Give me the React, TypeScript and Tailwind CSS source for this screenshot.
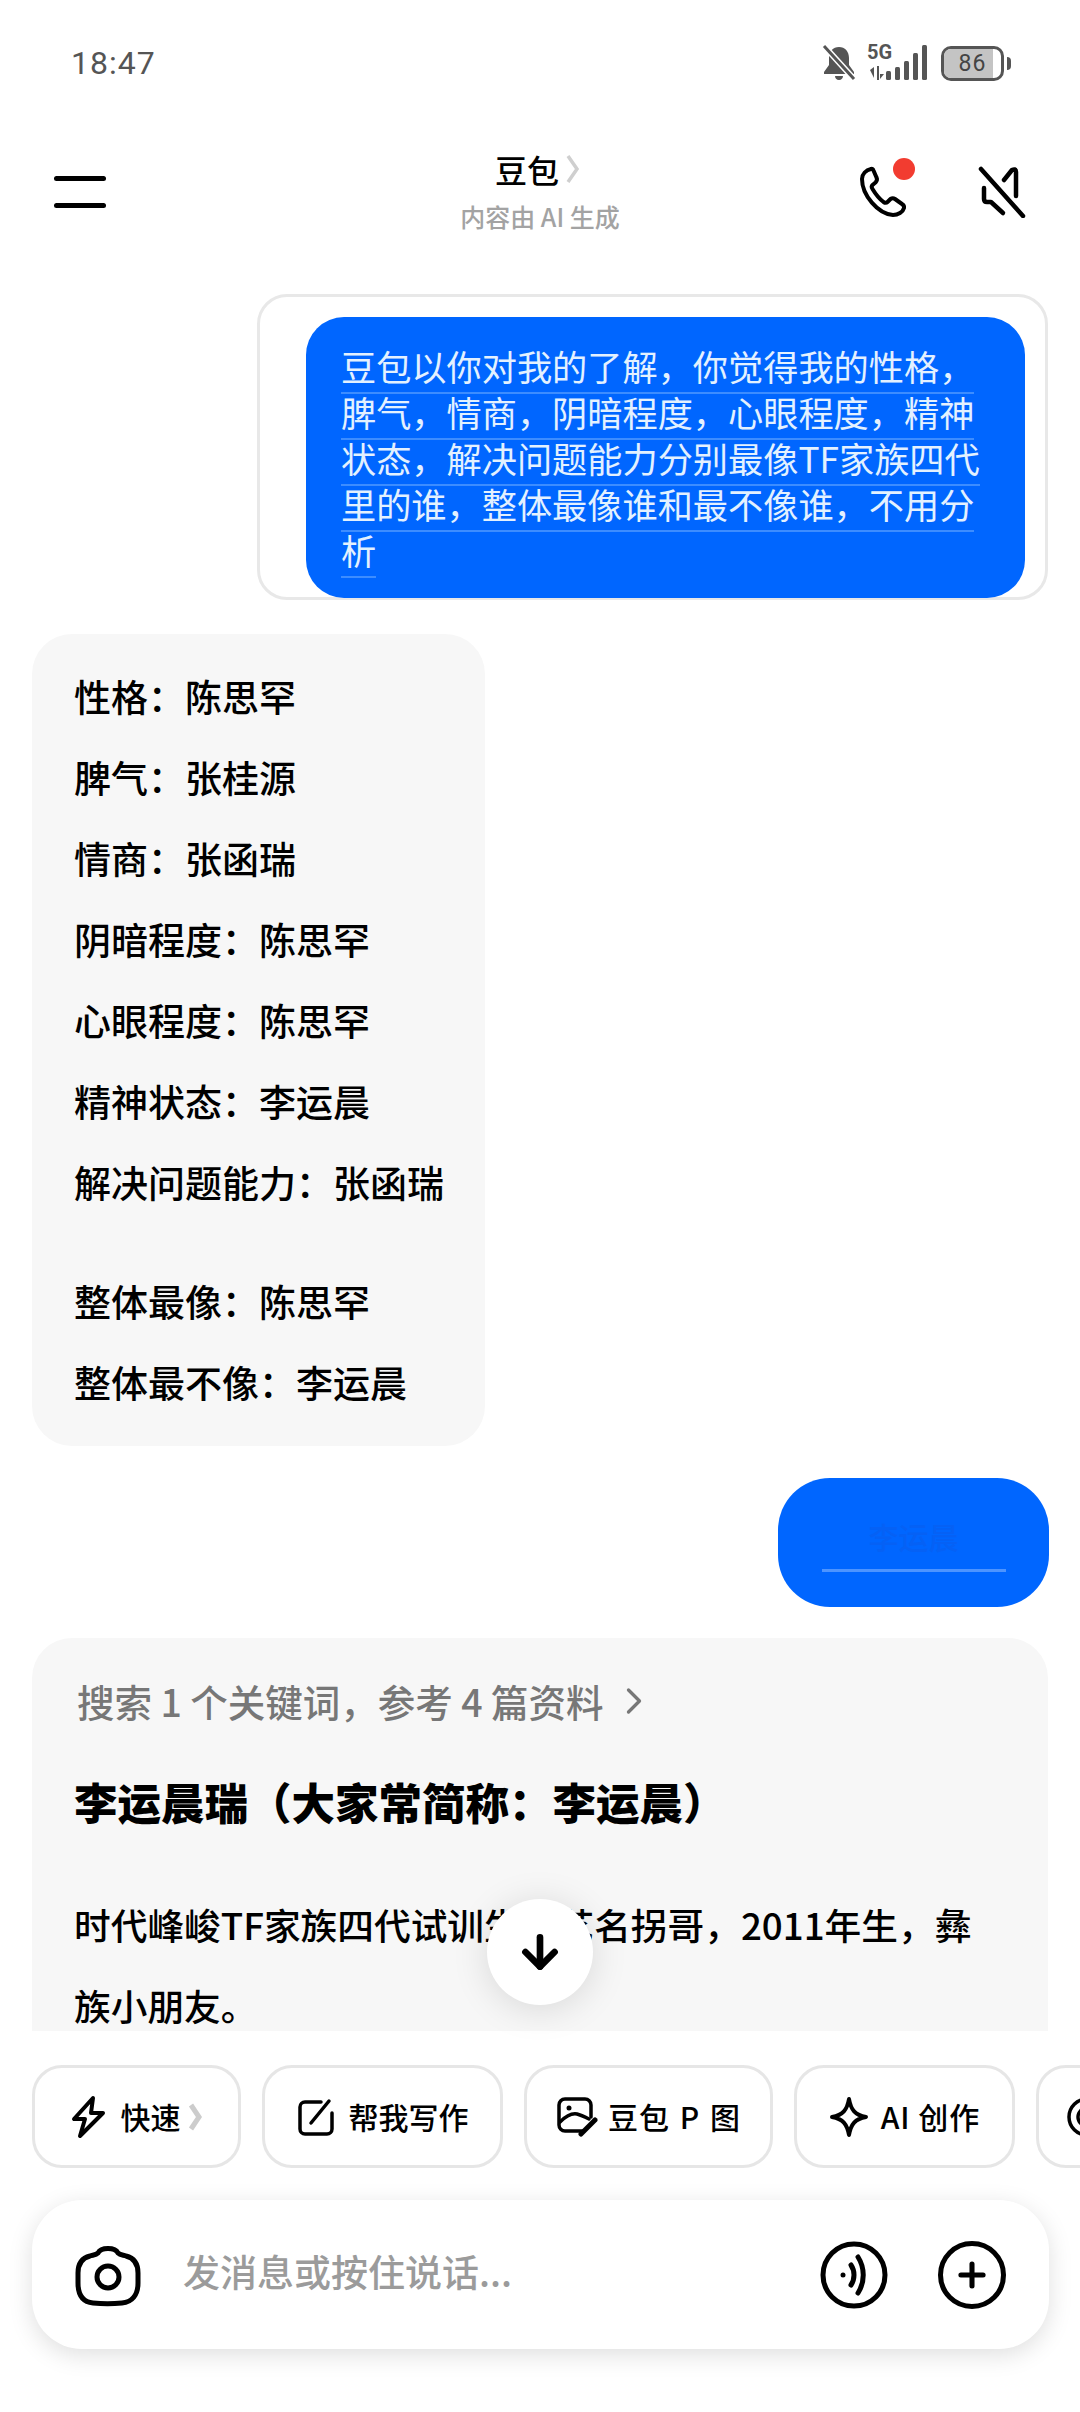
import { ArrowDown, ChevronRight, Plus } from "lucide-react";

// full-width punctuation
const C = "\uFF0C";
const K = "\uFF1A";
const L = "\uFF08";
const R = "\uFF09";

const answers = [
  ["性格", "陈思罕"],
  ["脾气", "张桂源"],
  ["情商", "张函瑞"],
  ["阴暗程度", "陈思罕"],
  ["心眼程度", "陈思罕"],
  ["精神状态", "李运晨"],
  ["解决问题能力", "张函瑞"],
];

const overall = [
  ["整体最像", "陈思罕"],
  ["整体最不像", "李运晨"],
];

const question = [
  `豆包以你对我的了解${C}你觉得我的性格${C}`,
  `脾气${C}情商${C}阴暗程度${C}心眼程度${C}精神`,
  `状态${C}解决问题能力分别最像TF家族四代`,
  `里的谁${C}整体最像谁和最不像谁${C}不用分`,
  "析",
];

function AnswerRow({ label, name }: { label: string; name: string }) {
  return (
    <p className="h-[81px] text-[37px] leading-[81px] font-medium whitespace-nowrap text-black">
      {label}
      {K}
      {name}
    </p>
  );
}

function StatusIcons() {
  return (
    <div className="flex items-center">
      <svg width="36" height="38" viewBox="0 0 36 38" className="mr-[10px]">
        <path d="M18 3c-6 0-10 4.500-10 11v7l-5 7v2h30v-2l-5-7v-7c0-6.500-4-11-10-11z" fill="#555" />
        <path d="M14 32h8c0 2-1.500 4-4 4s-4-2-4-4z" fill="#555" />
        <path d="M4 3l29 32" stroke="#fff" strokeWidth="6" />
        <path d="M3 2l30 33" stroke="#555" strokeWidth="3" />
      </svg>
      <div className="relative mr-[12px] h-[38px] w-[62px]">
        <span className="absolute -top-[3px] left-0 font-['Roboto'] text-[20px] leading-[22px] font-bold text-[#555]">5G</span>
        <svg width="62" height="38" viewBox="0 0 62 38">
          <path d="M3 26l4-3v11zM13 30l4 0-4 5zM10 22h2v14h-2z" fill="#555" />
          <rect x="19" y="27" width="5" height="9" rx="1.500" fill="#555" />
          <rect x="28" y="23" width="5" height="13" rx="1.500" fill="#555" />
          <rect x="37" y="17" width="5" height="19" rx="1.500" fill="#555" />
          <rect x="46" y="9" width="5" height="27" rx="1.500" fill="#555" />
          <rect x="55" y="1" width="5" height="35" rx="1.500" fill="#555" />
        </svg>
      </div>
      <div className="relative flex h-[35px] w-[63px] items-center justify-center overflow-hidden rounded-[10px] border-[3px] border-[#555] bg-white">
        <div className="absolute inset-y-0 left-0 w-[86%] bg-[#c4c4c4]" />
        <span className="relative font-['Roboto'] text-[23px] leading-none tracking-[1px] text-[#444]">86</span>
      </div>
      <div className="ml-[3px] h-[13px] w-[4px] rounded-r-sm bg-[#555]" />
    </div>
  );
}

function Chip({ width, icon, children }: { width: string; icon: React.ReactNode; children: React.ReactNode }) {
  return (
    <div className={`flex h-[103px] shrink-0 items-center justify-center rounded-[30px] border-[3px] border-[#e6e6e6] bg-white ${width}`}>
      {icon}
      {children}
    </div>
  );
}

const chipLabel = "text-[30px] font-medium whitespace-nowrap text-black";

export default function App() {
  return (
    <div className="flex h-[2412px] w-[1080px] flex-col overflow-hidden bg-white font-['Noto_Sans_CJK_SC',sans-serif]">
      {/* status bar */}
      <div className="flex h-[126px] shrink-0 items-center justify-between pr-[69px] pl-[71px]">
        <span className="font-['Roboto'] text-[32px] tracking-[1px] text-[#555]">18:47</span>
        <StatusIcons />
      </div>

      {/* header */}
      <div className="flex h-[132px] shrink-0 items-center justify-between pr-[54px] pl-[54px]">
        <div className="flex w-[220px] flex-col gap-[22px]">
          <div className="h-[5px] w-[52px] rounded-full bg-black" />
          <div className="h-[5px] w-[52px] rounded-full bg-black" />
        </div>
        <div className="flex flex-col items-center">
          <div className="-mt-[4px] -ml-[4px] flex h-[44px] items-center">
            <span className="text-[32px] font-medium text-black">豆包</span>
            <svg width="16" height="30" viewBox="0 0 16 30" className="ml-[6px]">
              <path d="M3 2l9 13-9 13" fill="none" stroke="#cfcfcf" strokeWidth="3.500" />
            </svg>
          </div>
          <span className="mt-[8px] text-[25px] leading-[34px] font-medium text-[#a3a3a3]">内容由 AI 生成</span>
        </div>
        <div className="flex w-[220px] items-center justify-end gap-[69px]">
          <div className="relative">
            <svg width="50" height="52" viewBox="0 0 50 52" fill="none" stroke="#000" strokeWidth="4" strokeLinejoin="round">
              <path d="M12 3c-5 1-9 5-9 10 0 16 16 35 31 36 5 0 10-3 11-7 .500-2-.500-3-2-4l-7-5c-1.500-1-3-1-4.500 0l-3 3c-1 1-2.500 1-4 0-4-3-8-8-11-13-1-1.500-1-3 0-4l3-2.500c1.500-1.500 2-3 1-5l-3-7c-.500-1.500-1.500-2-2.500-1.500z" />
            </svg>
            <div className="absolute -top-[8px] right-[-6px] h-[22px] w-[22px] rounded-full bg-[#f23c30]" />
          </div>
          <svg width="48" height="52" viewBox="0 0 48 52" fill="none" stroke="#000" strokeWidth="4.500" strokeLinecap="round" strokeLinejoin="round">
            <path d="M3 3l42 47" />
            <path d="M26 14l8-10c2-1 4-1 4 2v24" />
            <path d="M6 22v11c0 2 1 3 3 3h4l12 11" />
          </svg>
        </div>
      </div>

      {/* chat */}
      <div className="relative h-[1773px] shrink-0">
        <div className="h-full overflow-hidden pt-[36px]">
          <div className="ml-[257px] flex h-[306px] w-[791px] rounded-[30px] border-[3px] border-[#e8e8e8] pt-[20px] pl-[46px]">
            <div className="h-[281px] w-[719px] rounded-[38px] bg-[#0066ff] pt-[26px] pl-[35px]">
              {question.map((line) => (
                <p key={line} className="h-[46px] text-[35.2px] leading-[46px] whitespace-nowrap">
                  <span className="border-b-2 border-[#3d8dff] pb-[1px] text-[#e3f1ff]">{line}</span>
                </p>
              ))}
            </div>
          </div>

          <div className="mt-[34px] ml-[32px] h-[812px] w-[453px] rounded-[40px] bg-[#f7f7f7] pt-[22px] pl-[42px]">
            {answers.map(([label, name]) => (
              <AnswerRow key={label} label={label} name={name} />
            ))}
            <div className="h-[38px]" />
            {overall.map(([label, name]) => (
              <AnswerRow key={label} label={label} name={name} />
            ))}
          </div>

          <div className="mt-[32px] ml-[778px] flex h-[129px] w-[271px] flex-col items-center rounded-[52px] bg-[#0066ff] pt-[38px]">
            <span className="text-[30px] leading-[40px] font-medium text-[#0561f5]">李运晨</span>
            <div className="mt-[13px] h-[3px] w-[184px] bg-[#4d94ff]" />
          </div>

          <div className="mt-[31px] ml-[32px] h-[500px] w-[1016px] rounded-t-[40px] bg-[#f7f7f7] pt-[36px] pl-[45px]">
            <div className="flex h-[54px] items-center">
              <span className="text-[37.5px] font-medium whitespace-nowrap text-[#777]">搜索 1 个关键词{C}参考 4 篇资料</span>
              <ChevronRight size={44} strokeWidth={1.8} className="ml-[8px] text-[#777]" />
            </div>
            <h2 className="mt-[44px] -ml-[3px] h-[60px] text-[43.5px] leading-[60px] font-black whitespace-nowrap text-black">
              李运晨瑞{L}大家常简称{K}李运晨{R}
            </h2>
            <div className="mt-[52px] -ml-[3px] text-[36.7px] leading-[81px] font-medium whitespace-nowrap text-black">
              <p>时代峰峻TF家族四代试训生{C}艺名拐哥{C}2011年生{C}彝</p>
              <p>族小朋友。</p>
            </div>
          </div>
        </div>

        {/* scroll to bottom */}
        <div className="absolute bottom-[26px] left-[487px] flex h-[106px] w-[106px] items-center justify-center rounded-full bg-white shadow-[0_4px_36px_rgba(0,0,0,0.13)]">
          <ArrowDown size={50} strokeWidth={3.2} className="text-black" />
        </div>
      </div>

      {/* quick actions */}
      <div className="mt-[34px] flex h-[103px] shrink-0 gap-[21px] overflow-hidden pl-[32px]">
        <Chip
          width="w-[209px]"
          icon={
            <svg width="36" height="44" viewBox="0 0 36 44" fill="none" stroke="#000" strokeWidth="4" strokeLinejoin="round" className="mr-[14px]">
              <path d="M22 3L3 24h11l-5 17 23-23H20z" />
            </svg>
          }
        >
          <span className={chipLabel}>快速</span>
          <svg width="16" height="32" viewBox="0 0 16 32" className="ml-[6px]">
            <path d="M4 4l8 12-8 12" fill="none" stroke="#cccccc" strokeWidth="5" />
          </svg>
        </Chip>
        <Chip
          width="w-[241px]"
          icon={
            <svg width="38" height="40" viewBox="0 0 38 40" fill="none" stroke="#000" strokeWidth="3.500" strokeLinecap="round" className="mr-[14px]">
              <path d="M24 5H8a5 5 0 0 0-5 5v22a5 5 0 0 0 5 5h22a5 5 0 0 0 5-5V16" />
              <path d="M14 26L32 4" />
            </svg>
          }
        >
          <span className={chipLabel}>帮我写作</span>
        </Chip>
        <Chip
          width="w-[249px]"
          icon={
            <svg width="42" height="42" viewBox="0 0 42 42" fill="none" stroke="#000" strokeWidth="3.500" strokeLinecap="round" className="mr-[10px]">
              <path d="M28 35H9a6 6 0 0 1-6-6V9a6 6 0 0 1 6-6h20a6 6 0 0 1 6 6v12" />
              <circle cx="13" cy="12" r="2.500" fill="#000" stroke="none" />
              <path d="M4 26c6-6 12-9 17-8 4 1 8 3 12 5" />
              <path d="M25 38l14-14" strokeWidth="5" />
            </svg>
          }
        >
          <span className={`${chipLabel} tracking-[1px] [word-spacing:2px]`}>豆包 P 图</span>
        </Chip>
        <Chip
          width="w-[221px]"
          icon={
            <svg width="40" height="42" viewBox="0 0 40 42" fill="none" stroke="#000" strokeWidth="4" strokeLinejoin="round" className="mr-[12px]">
              <path d="M20 3c2 11 6 16 17 18-11 2-15 7-17 18-2-11-6-16-17-18 11-2 15-7 17-18z" />
            </svg>
          }
        >
          <span className={`${chipLabel} tracking-[1px]`}>AI 创作</span>
        </Chip>
        <div className="flex h-[103px] w-[200px] shrink-0 items-center rounded-[30px] border-[3px] border-[#e6e6e6] bg-white pl-[27px]">
          <svg width="40" height="42" viewBox="0 0 40 42" fill="none" stroke="#000" strokeWidth="3.500">
            <circle cx="21" cy="21" r="18" />
            <circle cx="21" cy="21" r="9" />
          </svg>
        </div>
      </div>

      {/* input */}
      <div className="mt-[32px] ml-[32px] flex h-[149px] w-[1017px] shrink-0 items-center rounded-[50px] bg-white pr-[43px] pl-[43px] shadow-[0_6px_24px_rgba(0,0,0,0.13)]">
        <svg width="66" height="64" viewBox="0 0 66 64" fill="none" stroke="#000" strokeWidth="5" className="shrink-0">
          <path d="M23 10c3-6 17-6 20 0 2 2 5 2 8 3 8 2 12 8 12 17v10c0 12-6 19-16 20-10 1-19 1-29 0C8 59 3 52 3 40V30c0-9 4-15 12-17 3-1 6-1 8-3z" />
          <circle cx="33" cy="34" r="11" />
        </svg>
        <span className="-mt-[6px] ml-[42px] flex-1 text-[37px] font-medium whitespace-nowrap text-[#9b9b9b]">发消息或按住说话...</span>
        <svg width="68" height="68" viewBox="0 0 68 68" fill="none" stroke="#000" strokeWidth="5" strokeLinecap="round" className="shrink-0">
          <circle cx="34" cy="34" r="31" />
          <circle cx="23" cy="34" r="2.500" fill="#000" stroke="none" />
          <path d="M31 24c4 6 4 14 0 20" />
          <path d="M38 16c7 11 7 25 0 36" />
        </svg>
        <div className="ml-[50px] flex h-[68px] w-[68px] shrink-0 items-center justify-center rounded-full border-[5px] border-black">
          <Plus size={38} strokeWidth={3.2} className="text-black" />
        </div>
      </div>
    </div>
  );
}
